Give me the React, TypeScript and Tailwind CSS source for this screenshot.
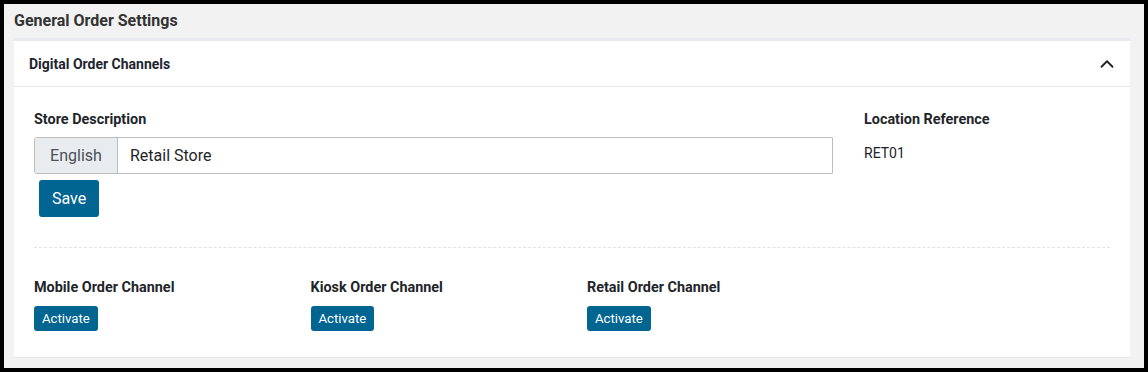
import { ChevronUp } from "lucide-react";

const channels = ["Mobile Order Channel", "Kiosk Order Channel", "Retail Order Channel"];

export default function App() {
  return (
    <div className="h-[372px] w-[1148px] border-4 border-black bg-[#f2f2f2] pl-[10px] pr-[14px] font-['Roboto',sans-serif] text-[#212529] flex flex-col">
      <div className="h-[34px] flex items-center">
        <h2 className="text-[16px] font-bold text-[#333]">General Order Settings</h2>
      </div>

      <div className="bg-white border-t-[3px] border-[#e6e9ee] border-b border-b-[#e5e5e5]">
        {/* accordion header */}
        <div className="h-[46px] pt-[1px] flex items-center justify-between pl-[15px] pr-[12px] border-b border-[#e6e6e6]">
          <span className="text-[14px] font-bold text-[#1d2430]">Digital Order Channels</span>
          <ChevronUp size={22} strokeWidth={2} className="text-[#222]" />
        </div>

        <div className="px-[20px] pt-[22px] pb-[26px]">
          <div className="grid grid-cols-[799px_1fr] gap-x-[31px]">
            <div>
              <label className="block text-[14.4px] font-bold leading-[21px]">Store Description</label>
              <div className="mt-[7px] flex h-[37px] border border-[#bdbdbd] rounded-l-[3px]">
                <span className="w-[83px] shrink-0 flex items-center justify-center bg-[#e9ecef] text-[#495057] text-[16px] border-r border-[#bdbdbd] rounded-l-[3px]">
                  English
                </span>
                <input
                  className="flex-1 px-[12px] text-[16px] text-[#212529] outline-none"
                  defaultValue="Retail Store"
                />
              </div>
              <button className="mt-[6px] ml-[5px] h-[37px] px-[13px] rounded-[3px] bg-[#016591] text-white text-[16px]">
                Save
              </button>
            </div>
            <div>
              <div className="text-[14.4px] font-bold leading-[21px]">Location Reference</div>
              <div className="mt-[13px] text-[14px] leading-[21px] text-[#212529]">RET01</div>
            </div>
          </div>

          <div className="mt-[30px] border-t border-dashed border-[#e2e2e2]" />

          <div className="mt-[29px] grid grid-cols-4 w-[1106px]">
            {channels.map((c) => (
              <div key={c} className="pr-[30px]">
                <div className="text-[14.4px] font-bold leading-[21px]">{c}</div>
                <button className="mt-[8px] h-[25px] px-[8px] rounded-[3px] bg-[#016591] text-white text-[13.2px]">
                  Activate
                </button>
              </div>
            ))}
          </div>
        </div>
      </div>
    </div>
  );
}
